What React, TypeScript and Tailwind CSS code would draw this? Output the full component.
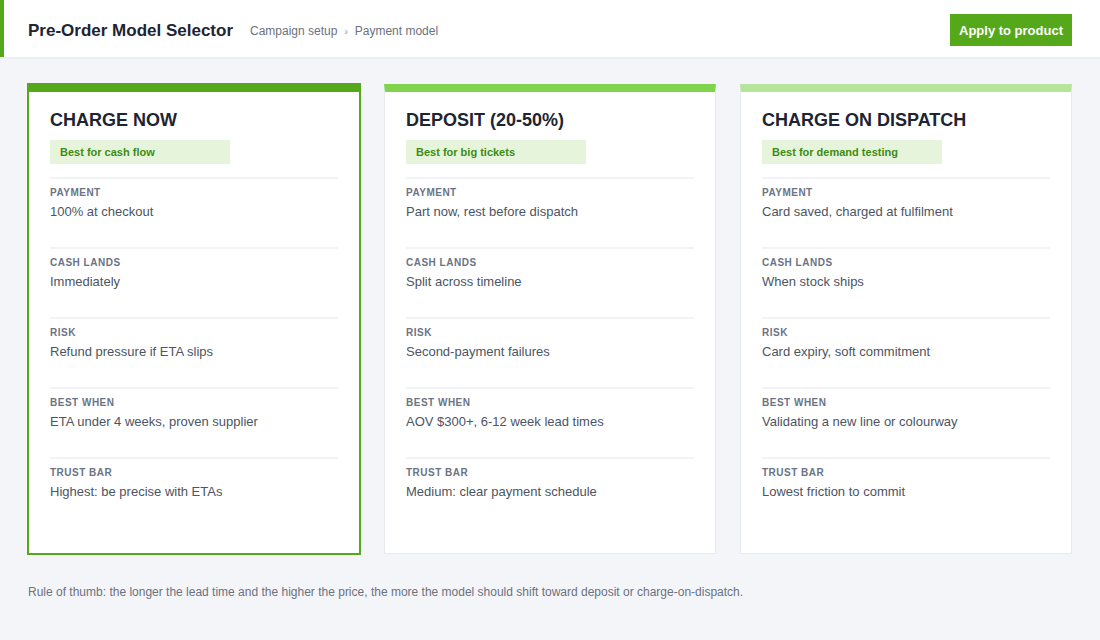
import React from "react";

type Row = { label: string; value: string };
type Card = {
  title: string;
  badge: string;
  rows: Row[];
  selected?: boolean;
  bar: string;
};

const cards: Card[] = [
  {
    title: "CHARGE NOW",
    badge: "Best for cash flow",
    selected: true,
    bar: "border-t-[#55a819]",
    rows: [
      { label: "PAYMENT", value: "100% at checkout" },
      { label: "CASH LANDS", value: "Immediately" },
      { label: "RISK", value: "Refund pressure if ETA slips" },
      { label: "BEST WHEN", value: "ETA under 4 weeks, proven supplier" },
      { label: "TRUST BAR", value: "Highest: be precise with ETAs" },
    ],
  },
  {
    title: "DEPOSIT (20-50%)",
    badge: "Best for big tickets",
    bar: "border-t-[#80d44b]",
    rows: [
      { label: "PAYMENT", value: "Part now, rest before dispatch" },
      { label: "CASH LANDS", value: "Split across timeline" },
      { label: "RISK", value: "Second-payment failures" },
      { label: "BEST WHEN", value: "AOV $300+, 6-12 week lead times" },
      { label: "TRUST BAR", value: "Medium: clear payment schedule" },
    ],
  },
  {
    title: "CHARGE ON DISPATCH",
    badge: "Best for demand testing",
    bar: "border-t-[#b5e59a]",
    rows: [
      { label: "PAYMENT", value: "Card saved, charged at fulfilment" },
      { label: "CASH LANDS", value: "When stock ships" },
      { label: "RISK", value: "Card expiry, soft commitment" },
      { label: "BEST WHEN", value: "Validating a new line or colourway" },
      { label: "TRUST BAR", value: "Lowest friction to commit" },
    ],
  },
];

function ModelCard({ card }: { card: Card }) {
  const frame = card.selected
    ? "border border-[#55a819] outline outline-1 outline-[#55a819]"
    : "border border-[#e8eaef]";
  return (
    <div className={`bg-white border-t-8 ${frame} ${card.bar} px-[21px] pt-[16px] pb-[26px]`}>
      <div className="text-[18px] leading-[24px] font-bold text-[#1e2432]">{card.title}</div>
      <div className="mt-[8px] w-[180px] h-[24px] bg-[#e6f4dc] pl-[10px] flex items-center text-[11px] font-bold text-[#3f8c12]">
        {card.badge}
      </div>
      <div className="mt-[13px]">
        {card.rows.map((r) => (
          <div key={r.label} className="h-[70px] border-t-2 border-[#f2f3f6] pt-[7px]">
            <div className="text-[10px] leading-[14px] font-bold tracking-[0.05em] text-[#6b7385]">{r.label}</div>
            <div className="mt-[2px] text-[13px] leading-[20px] text-[#4b5563]">{r.value}</div>
          </div>
        ))}
      </div>
    </div>
  );
}

export default function App() {
  return (
    <div
      className="w-full h-[640px] bg-[#f4f5f9]"
      style={{ fontFamily: '"Liberation Sans", Arial, sans-serif' }}
    >
      <header className="bg-white border-b-2 border-[#eceef3]">
        <div className="h-[57px] border-l-4 border-[#55a819] pl-[24px] pr-[28px] pt-[3px] flex items-center">
          <h1 className="mt-[2px] text-[17px] font-bold text-[#1e2432]">Pre-Order Model Selector</h1>
          <nav className="mt-[2px] ml-[17px] flex items-center text-[12px] text-[#6b7280]">
            <span>Campaign setup</span>
            <span className="mx-[7px] text-[10px] text-[#8b93a1]">›</span>
            <span>Payment model</span>
          </nav>
          <button className="ml-auto h-[32px] px-[9px] pt-[2px] bg-[#55a819] text-white text-[13px] font-bold">
            Apply to product
          </button>
        </div>
      </header>
      <main className="px-[28px] pt-[25px]">
        <div className="grid grid-cols-3 gap-[24px]">
          {cards.map((c) => (
            <ModelCard key={c.title} card={c} />
          ))}
        </div>
        <p className="mt-[29px] text-[12px] leading-[18px] text-[#6b7280]">
          Rule of thumb: the longer the lead time and the higher the price, the more the model should shift toward deposit or charge-on-dispatch.
        </p>
      </main>
    </div>
  );
}
